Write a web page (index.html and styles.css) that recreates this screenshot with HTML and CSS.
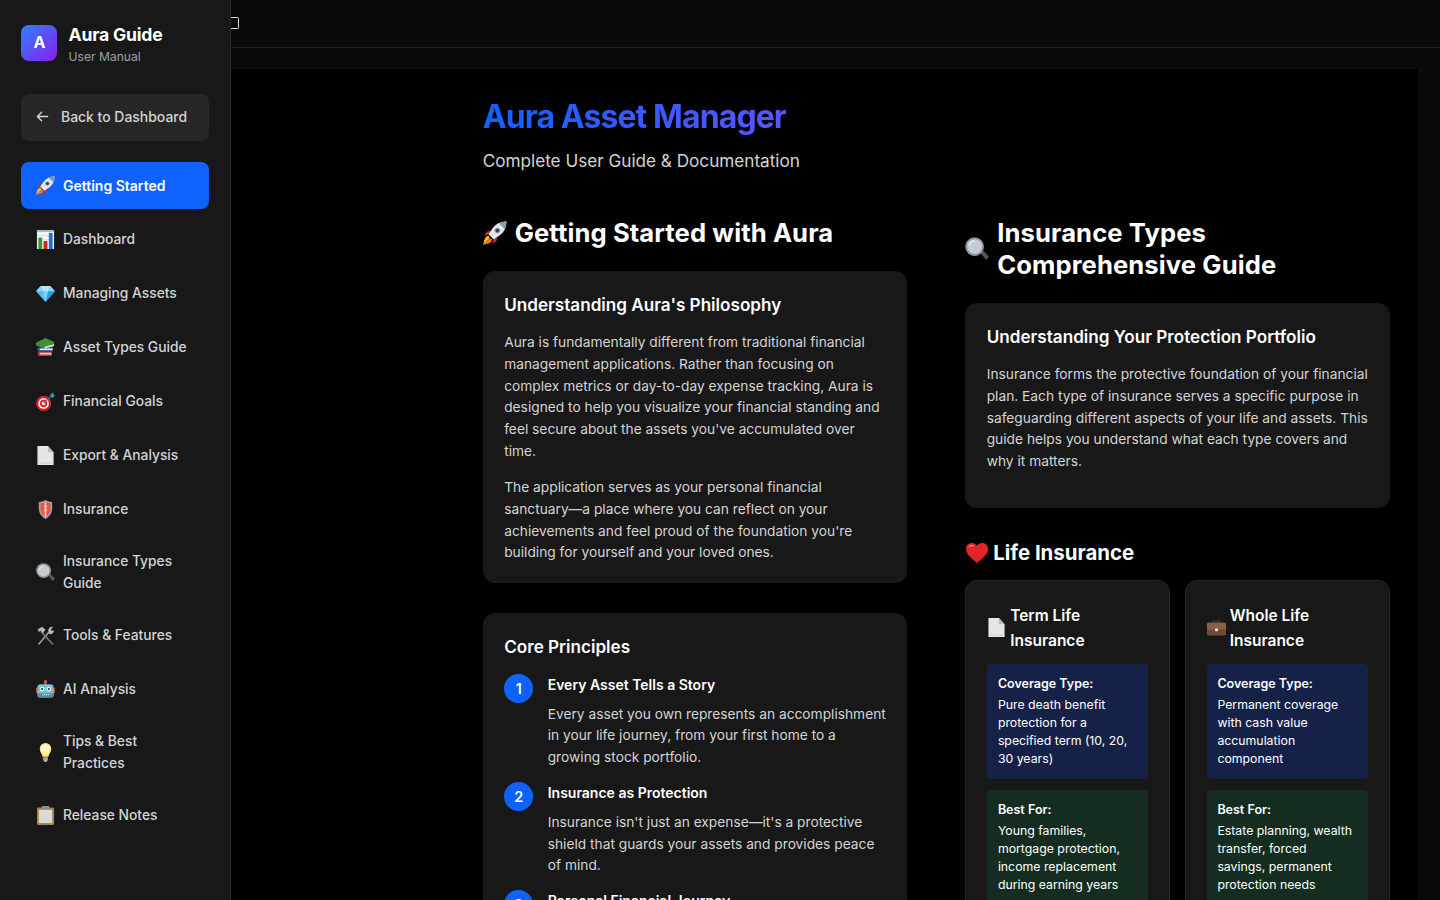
FILE: index.html
```html
<!DOCTYPE html>
<html lang="en">
<head>
    <meta charset="UTF-8">
    <meta name="viewport" content="width=device-width, initial-scale=1.0">
    <title>Aura Guide - User Manual</title>
    <link rel="stylesheet" href="styles.css">
</head>
<body>
    <!-- emoji drawings, reused through <use> -->
    <svg class="defs" aria-hidden="true">
        <symbol id="e-rocket" viewBox="0 0 20 20">
            <path d="M4.500 11 1 12.500 3 9l3.500-1z" fill="#d8232a"/>
            <path d="M9 15.500 7.500 19 11 17l1-3.500z" fill="#d8232a"/>
            <path d="M5.500 14.500 0 20l1.500-5.200 1.500-2 2-.3z" fill="#ffc21a"/>
            <path d="M5.500 14.500 0 20l5.200-1.500 2-1.500.3-2z" fill="#f47b16"/>
            <path d="M19.500.5c-4.800 0-8.500 1.800-11 5L4.500 11l4.500 4.500 5.500-4C17.700 9 19.500 5.300 19.500.5z" fill="#e4e8ec"/>
            <path d="M19.500.5c-2.400 0-4.400.5-6.200 1.400l4.800 4.800C19 4.900 19.500 2.900 19.500.5z" fill="#7f9cb8"/>
            <circle cx="12" cy="8" r="2.300" fill="#8b98a5"/>
            <circle cx="12" cy="8" r="1.500" fill="#2a3f6b"/>
        </symbol>
        <symbol id="e-chart" viewBox="0 0 20 20">
            <rect x="1" y="0" width="18" height="20" fill="#f2f4f6"/>
            <path d="M1 0h18v2H1z" fill="#aab4be"/>
            <path d="M1 6h18M1 10h18M1 14h18" stroke="#c5ccd3" stroke-width=".4"/>
            <rect x="2.500" y="8" width="4" height="12" fill="#2ca02c"/>
            <rect x="8" y="11.500" width="4" height="8.500" fill="#d0271d"/>
            <rect x="13.500" y="3" width="4" height="17" fill="#1f6fd0"/>
        </symbol>
        <symbol id="e-gem" viewBox="0 0 20 20">
            <path d="M5 2h10l5 5.500L10 19 0 7.500z" fill="#52bdf3"/>
            <path d="M5 2h10l-2 5.500H7z" fill="#b6e8ff"/>
            <path d="M5 2 0 7.500h7zM15 2l5 5.500h-7z" fill="#8ad6fb"/>
            <path d="M7 7.500h6L10 19z" fill="#7fd2fa"/>
            <path d="M13 7.500h7L10 19z" fill="#2a9fe0"/>
        </symbol>
        <symbol id="e-books" viewBox="0 0 20 20">
            <path d="M2 14.500h14.500V19H3.500A1.500 1.500 0 0 1 2 17.500z" fill="#b8333a"/>
            <path d="M4 15.500h12.500v1H4zM4 17.300h12.500v.7H4z" fill="#eee"/>
            <path d="M1.500 10 17.500 9.500v5H3A1.500 1.500 0 0 1 1.500 13z" fill="#35508f"/>
            <path d="M4 11h13.500v1.800H4z" fill="#eee"/>
            <path d="M0 5 10 0l9 4v4.500L9 11 0 8z" fill="#3f8f3a"/>
            <path d="M9 9.300 19 6.500v2l-10 2.500z" fill="#e9e4d3"/>
        </symbol>
        <symbol id="e-dart" viewBox="0 0 20 20">
            <circle cx="8" cy="12" r="8" fill="#d3222a"/>
            <circle cx="8" cy="12" r="5.600" fill="#f3f3f3"/>
            <circle cx="8" cy="12" r="3.800" fill="#d3222a"/>
            <circle cx="8" cy="12" r="1.900" fill="#f3f3f3"/>
            <path d="M8 12 16 4" stroke="#5d7382" stroke-width="1.200"/>
            <path d="M15 3l3-2.500.5 2.500 1.500.5L17 6.500z" fill="#2aa9c0"/>
        </symbol>
        <symbol id="e-page" viewBox="0 0 20 20">
            <path d="M1.500 0h11L18.500 6.500V20h-17z" fill="#e6e6e6"/>
            <path d="M12.500 0 18.500 6.500h-6z" fill="#bdbdbd"/>
            <path d="M3 17.500h14v1H3z" fill="#cfcfcf"/>
        </symbol>
        <symbol id="e-shield" viewBox="0 0 20 20">
            <path d="M10 0c2.400 1.400 4.500 1.900 7 2v7c0 5-3 9-7 11-4-2-7-6-7-11V2c2.500-.1 4.600-.6 7-2z" fill="#9aa3ab"/>
            <path d="M10 2c2 1 3.500 1.400 5.300 1.500V9c0 4-2.200 7-5.300 8.900C6.900 16 4.700 13 4.700 9V3.500C6.500 3.400 8 3 10 2z" fill="#e4573f"/>
            <path d="M9.200 2.500h1.600v15H9.200zM8 6h4v1H8zM8 10h4v1H8z" fill="#f3d0c6"/>
        </symbol>
        <symbol id="e-glass" viewBox="0 0 20 20">
            <path d="m12 12 2-2 6 6.500-2.500 2.500z" fill="#4a5a68"/>
            <circle cx="8" cy="8" r="7.800" fill="#8d959c"/>
            <circle cx="8" cy="8" r="6.200" fill="#c5cbd0"/>
            <path d="M3.500 7A5 5 0 0 1 8 3" stroke="#eef1f3" stroke-width="1" fill="none"/>
        </symbol>
        <symbol id="e-tools" viewBox="0 0 20 20">
            <path d="M3 19 13 7" stroke="#a0a5aa" stroke-width="1.600" stroke-linecap="round"/>
            <path d="M17.500 19 6 6.500" stroke="#8c7a66" stroke-width="1.600" stroke-linecap="round"/>
            <path d="M2 3.500 6.500.8 10 4 7 7.500 4.500 5 2.800 6.200z" fill="#b5babe"/>
            <path d="M13 6a4 4 0 0 1 5-5l-2.200 2.400 1 1.800 2.200-.7A4 4 0 0 1 14 8.500z" fill="#b5babe"/>
        </symbol>
        <symbol id="e-robot" viewBox="0 0 20 20">
            <rect x="9" y="2" width="2" height="3" fill="#8a939a"/>
            <circle cx="10" cy="1.800" r="1.800" fill="#e5503e"/>
            <rect x="0" y="8" width="3" height="6" rx="1" fill="#c8542c"/>
            <rect x="17" y="8" width="3" height="6" rx="1" fill="#c8542c"/>
            <rect x="1.500" y="4.500" width="17" height="14" rx="3.500" fill="#74c2cf"/>
            <rect x="1.500" y="14" width="17" height="4.500" rx="2" fill="#5b8d9c"/>
            <circle cx="6.500" cy="9.500" r="2.400" fill="#f0f6f8"/>
            <circle cx="13.500" cy="9.500" r="2.400" fill="#f0f6f8"/>
            <circle cx="6.500" cy="9.500" r="1.200" fill="#31444f"/>
            <circle cx="13.500" cy="9.500" r="1.200" fill="#31444f"/>
            <path d="M6.500 15.500h7" stroke="#e9eef0" stroke-width="1.300" stroke-dasharray="1 1"/>
        </symbol>
        <symbol id="e-bulb" viewBox="0 0 20 20">
            <path d="M10 0a6 6 0 0 0-6 6.500c0 3 2.500 5 3 8h6c.5-3 3-5 3-8A6 6 0 0 0 10 0z" fill="#ffe98a"/>
            <path d="M10 1.500a4.600 4.600 0 0 0-3.800 7.500c1.500 2 2.800.5 3.800.5s2.300 1.500 3.800-.5A4.600 4.600 0 0 0 10 1.500z" fill="#fff6c4"/>
            <path d="M7.500 15h5v3l-1.300 2H8.800l-1.300-2z" fill="#a9a9a4"/>
        </symbol>
        <symbol id="e-clip" viewBox="0 0 20 20">
            <rect x="1" y="1.500" width="18" height="18.500" rx="1.200" fill="#a5814f"/>
            <rect x="3" y="4" width="14" height="14" fill="#d9d9d9"/>
            <rect x="6" y="0" width="8" height="3" rx=".8" fill="#8b8f93"/>
        </symbol>
        <symbol id="e-heart" viewBox="0 0 20 20">
            <path d="M10 19C4 14.500 0 10.800 0 6.200 0 3 2.400.8 5.200.8 7.200.8 9 1.800 10 3.600 11 1.800 12.800.8 14.800.8 17.600.8 20 3 20 6.200c0 4.600-4 8.300-10 12.800z" fill="#e5242a"/>
            <path d="M3 4.500c1-1.500 3-1.700 4-.8" stroke="#ff8d8d" stroke-width="1" fill="none"/>
        </symbol>
        <symbol id="e-case" viewBox="0 0 20 20">
            <path d="M7 5V3h6v2" stroke="#4d3b2f" stroke-width="1.500" fill="none"/>
            <rect x="0" y="5" width="20" height="13.500" rx="1.500" fill="#6d4a37"/>
            <path d="M0 6.500C0 5.700.7 5 1.500 5h17c.8 0 1.500.7 1.500 1.500V12H0z" fill="#8a6048"/>
            <rect x="8.500" y="11" width="3" height="3" rx=".5" fill="#f0f0ee"/>
        </symbol>
    </svg>

    <div class="app">
        <aside class="sidebar">
            <div class="brand">
                <div class="brand-logo">A</div>
                <div>
                    <div class="brand-name">Aura Guide</div>
                    <div class="brand-sub">User Manual</div>
                </div>
            </div>

            <a class="back-btn" href="#">
                <svg class="back-arrow" viewBox="0 0 14 14" fill="none" stroke="currentColor" stroke-width="1.500" stroke-linecap="round" stroke-linejoin="round"><path d="M12.500 7h-11M6 2.500 1.500 7 6 11.500"/></svg>
                Back to Dashboard
            </a>

            <nav class="nav">
                <a class="nav-item active" href="#"><span class="nav-icon"><svg><use href="#e-rocket"/></svg></span><span class="nav-label">Getting Started</span></a>
                <a class="nav-item" href="#"><span class="nav-icon"><svg><use href="#e-chart"/></svg></span><span class="nav-label">Dashboard</span></a>
                <a class="nav-item" href="#"><span class="nav-icon"><svg><use href="#e-gem"/></svg></span><span class="nav-label">Managing Assets</span></a>
                <a class="nav-item" href="#"><span class="nav-icon"><svg><use href="#e-books"/></svg></span><span class="nav-label">Asset Types Guide</span></a>
                <a class="nav-item" href="#"><span class="nav-icon"><svg><use href="#e-dart"/></svg></span><span class="nav-label">Financial Goals</span></a>
                <a class="nav-item" href="#"><span class="nav-icon"><svg><use href="#e-page"/></svg></span><span class="nav-label">Export &amp; Analysis</span></a>
                <a class="nav-item" href="#"><span class="nav-icon"><svg><use href="#e-shield"/></svg></span><span class="nav-label">Insurance</span></a>
                <a class="nav-item" href="#"><span class="nav-icon"><svg><use href="#e-glass"/></svg></span><span class="nav-label">Insurance Types Guide</span></a>
                <a class="nav-item" href="#"><span class="nav-icon"><svg><use href="#e-tools"/></svg></span><span class="nav-label">Tools &amp; Features</span></a>
                <a class="nav-item" href="#"><span class="nav-icon"><svg><use href="#e-robot"/></svg></span><span class="nav-label">AI Analysis</span></a>
                <a class="nav-item" href="#"><span class="nav-icon"><svg><use href="#e-bulb"/></svg></span><span class="nav-label">Tips &amp; Best Practices</span></a>
                <a class="nav-item" href="#"><span class="nav-icon"><svg><use href="#e-clip"/></svg></span><span class="nav-label">Release Notes</span></a>
            </nav>
        </aside>

        <div class="main">
            <header class="topbar"><span class="menu-box"></span></header>

            <main class="content">
                <h1 class="page-title">Aura Asset Manager</h1>
                <p class="page-sub">Complete User Guide &amp; Documentation</p>

                <div class="columns">
                    <section>
                        <h2 class="section-title"><svg class="h2-icon"><use href="#e-rocket"/></svg><span>Getting Started with Aura</span></h2>

                        <div class="card">
                            <h3>Understanding Aura's Philosophy</h3>
                            <p>Aura is fundamentally different from traditional financial management applications. Rather than focusing on complex metrics or day-to-day expense tracking, Aura is designed to help you visualize your financial standing and feel secure about the assets you've accumulated over time.</p>
                            <p>The application serves as your personal financial sanctuary—a place where you can reflect on your achievements and feel proud of the foundation you're building for yourself and your loved ones.</p>
                        </div>

                        <div class="card">
                            <h3>Core Principles</h3>
                            <div class="step">
                                <div class="step-num">1</div>
                                <div class="step-body">
                                    <h4>Every Asset Tells a Story</h4>
                                    <p>Every asset you own represents an accomplishment in your life journey, from your first home to a growing stock portfolio.</p>
                                </div>
                            </div>
                            <div class="step">
                                <div class="step-num">2</div>
                                <div class="step-body">
                                    <h4>Insurance as Protection</h4>
                                    <p>Insurance isn't just an expense—it's a protective shield that guards your assets and provides peace of mind.</p>
                                </div>
                            </div>
                            <div class="step">
                                <div class="step-num">3</div>
                                <div class="step-body">
                                    <h4>Personal Financial Journey</h4>
                                </div>
                            </div>
                        </div>
                    </section>

                    <section>
                        <h2 class="section-title"><svg class="h2-icon"><use href="#e-glass"/></svg><span>Insurance Types Comprehensive Guide</span></h2>

                        <div class="card card-tall">
                            <h3>Understanding Your Protection Portfolio</h3>
                            <p>Insurance forms the protective foundation of your financial plan. Each type of insurance serves a specific purpose in safeguarding different aspects of your life and assets. This guide helps you understand what each type covers and why it matters.</p>
                        </div>

                        <h3 class="group-title"><svg class="group-icon"><use href="#e-heart"/></svg>Life Insurance</h3>

                        <div class="type-grid">
                            <div class="type-card">
                                <h4 class="type-name"><svg class="type-icon"><use href="#e-page"/></svg><span>Term Life Insurance</span></h4>
                                <div class="info info-blue">
                                    <strong>Coverage Type:</strong>
                                    <p>Pure death benefit protection for a specified term (10, 20, 30 years)</p>
                                </div>
                                <div class="info info-green">
                                    <strong>Best For:</strong>
                                    <p>Young families, mortgage protection, income replacement during earning years</p>
                                </div>
                            </div>
                            <div class="type-card">
                                <h4 class="type-name"><svg class="type-icon"><use href="#e-case"/></svg><span>Whole Life Insurance</span></h4>
                                <div class="info info-blue">
                                    <strong>Coverage Type:</strong>
                                    <p>Permanent coverage with cash value accumulation component</p>
                                </div>
                                <div class="info info-green">
                                    <strong>Best For:</strong>
                                    <p>Estate planning, wealth transfer, forced savings, permanent protection needs</p>
                                </div>
                            </div>
                        </div>
                    </section>
                </div>
            </main>
        </div>
    </div>
</body>
</html>
```

FILE: styles.css
```css
* {
    box-sizing: border-box;
}
html, body {
    height: 100%;
}
body {
    margin: 0;
    font-family: Inter, "Noto Sans", sans-serif;
    font-size: 13.75px;
    line-height: 21.76px;
    color: #fff;
    background-color: #0a0a0a;
    overflow: hidden;
}
a {
    text-decoration: none;
    color: inherit;
}
h1, h2, h3, h4, p {
    margin: 0;
}
.defs {
    display: none;
}
.app {
    display: flex;
    height: 900px;
    overflow: hidden;
}

/* sidebar */
.sidebar {
    flex: 0 0 231px;
    background-color: #181818;
    border-right: 1px solid #2a2a2a;
    padding: 23.5px 21.4px 0;
}
.brand {
    display: flex;
    align-items: flex-start;
    gap: 11.2px;
    margin-bottom: 28.5px;
}
.brand-logo {
    width: 36px;
    height: 36px;
    margin-top: 1.500px;
    border-radius: 8px;
    background: linear-gradient(135deg, #2f80ff, #8a1ef0);
    display: flex;
    align-items: center;
    justify-content: center;
    font-size: 16px;
    font-weight: 700;
}
.brand-name {
    font-size: 17.6px;
    font-weight: 700;
    line-height: 21px;
    letter-spacing: -0.2px;
}
.brand-sub {
    font-size: 12.1px;
    line-height: 17px;
    margin-top: 3.5px;
    color: #a0a0a0;
}
.back-btn {
    display: flex;
    align-items: center;
    gap: 11.5px;
    height: 47px;
    padding: 0 15.1px 1px;
    border-radius: 8px;
    background-color: #262626;
    color: #d4d4d4;
    font-size: 13.95px;
    font-weight: 500;
    margin-bottom: 21px;
}
.back-arrow {
    width: 13px;
    height: 13px;
}
.nav {
    display: flex;
    flex-direction: column;
    gap: 7px;
}
.nav-item {
    display: flex;
    align-items: center;
    gap: 8px;
    padding: 10.75px 14.6px;
    border-radius: 8px;
    color: #d4d4d4;
    font-size: 13.8px;
    font-weight: 500;
}
.nav-label {
    margin: 1px 0 -1px;
}
.nav-item.active {
    background-color: #0f62fe;
    color: #fff;
    font-size: 14px;
    font-weight: 600;
}
.nav-icon {
    flex: 0 0 19px;
    height: 25.5px;
    display: flex;
    align-items: center;
}
.nav-icon svg {
    width: 19px;
    height: 19px;
}

/* main area */
.main {
    flex: 1;
    min-width: 0;
}
.topbar {
    height: 48px;
    border-bottom: 1px solid #1e1e1e;
    padding-top: 17px;
}
.menu-box {
    display: block;
    width: 8px;
    height: 12px;
    border: 1.5px solid #d8d8d8;
    border-left: none;
    border-radius: 0 2px 2px 0;
}
.content {
    margin: 21px 22px 0 0;
    height: 900px;
    background-color: #000;
    padding: 28px 29px 0 251.7px;
}
.page-title {
    display: inline-block;
    font-size: 32px;
    font-weight: 700;
    line-height: 40px;
    letter-spacing: -0.9px;
    background: linear-gradient(90deg, #0f62fe, #5a55ff);
    -webkit-background-clip: text;
    background-clip: text;
    color: transparent;
    vertical-align: top;
}
.page-sub {
    font-size: 17.15px;
    line-height: 26px;
    margin-top: 11px;
    color: #d4d4d4;
}
.columns {
    display: grid;
    grid-template-columns: 424.5px 424.5px;
    column-gap: 58px;
    margin-top: 43px;
}
.section-title {
    display: flex;
    align-items: center;
    gap: 8px;
    font-size: 25.6px;
    font-weight: 700;
    line-height: 32px;
    letter-spacing: 0.1px;
    margin-bottom: 21.5px;
}
.h2-icon {
    flex: 0 0 24px;
    width: 24px;
    height: 24px;
}

/* cards */
.card {
    background-color: #181818;
    border-radius: 12px;
    padding: 22px 21.5px 19px;
    margin-bottom: 30px;
}
.card-tall {
    padding-bottom: 35.5px;
}
.card h3 {
    font-size: 17.12px;
    font-weight: 600;
    line-height: 24px;
    margin-bottom: 15.5px;
}
.card p {
    color: #d4d4d4;
    margin-bottom: 14.4px;
}
.card p:last-child {
    margin-bottom: 0;
}
.step {
    display: flex;
    gap: 14.5px;
    margin-bottom: 13.4px;
}
.step:first-of-type {
    margin-top: -0.5px;
}
.step-body {
    margin-right: -3px;
}
.step-num {
    flex: 0 0 29px;
    height: 29px;
    border-radius: 50%;
    background-color: #0f62fe;
    display: flex;
    align-items: center;
    justify-content: center;
    font-size: 14.4px;
    font-weight: 600;
}
.step h4 {
    font-size: 14px;
    font-weight: 600;
    line-height: 22px;
    margin-bottom: 7.5px;
}

/* insurance types */
.group-title {
    display: flex;
    align-items: center;
    gap: 5px;
    font-size: 20.4px;
    font-weight: 700;
    line-height: 26px;
    margin: 31.5px 0 14px;
}
.group-icon {
    width: 22px;
    height: 22px;
    margin-left: 1px;
}
.type-grid {
    display: grid;
    grid-template-columns: 1fr 1fr;
    gap: 14.5px;
}
.type-card {
    background-color: #181818;
    border: 1px solid #262626;
    border-radius: 12px;
    padding: 22px 21px 21px;
}
.type-name {
    display: flex;
    align-items: center;
    gap: 4px;
    font-size: 15.5px;
    font-weight: 600;
    line-height: 25px;
    margin-bottom: 11px;
}
.type-icon {
    flex: 0 0 19px;
    width: 19px;
    height: 19px;
}
.info {
    border-radius: 4px;
    padding: 10.7px 10.7px 11.7px;
    font-size: 12.3px;
    line-height: 18px;
    margin-bottom: 11px;
}
.info strong {
    display: block;
    font-size: 12.5px;
    font-weight: 600;
    line-height: 18px;
    margin-bottom: 3px;
}
.info-blue {
    background-color: #162147;
}
.info-green {
    background-color: #142d20;
}
```
